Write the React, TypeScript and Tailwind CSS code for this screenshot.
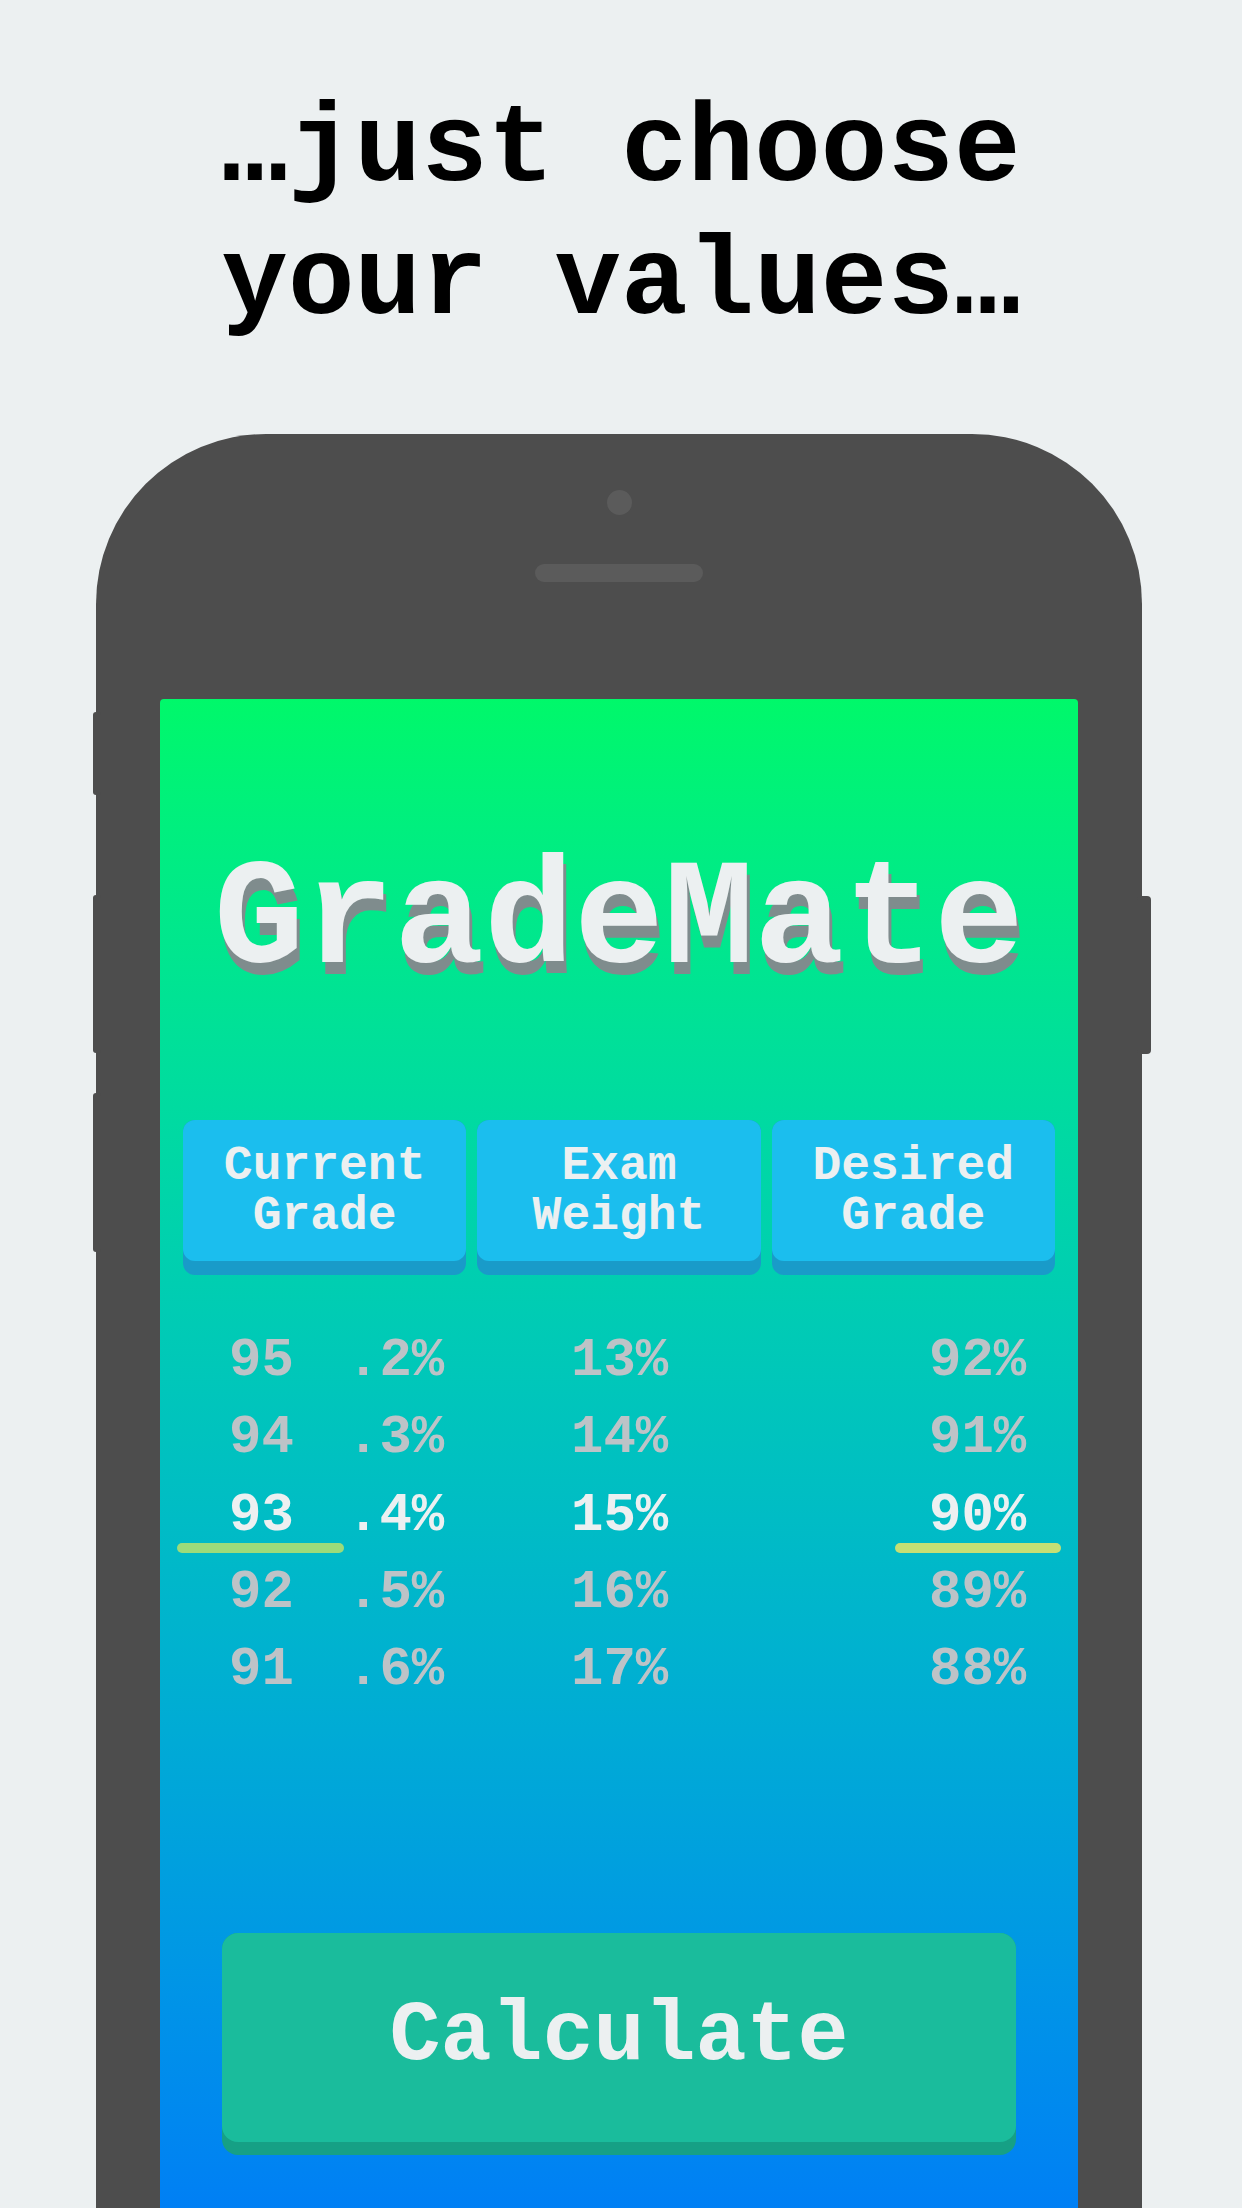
const MONO = "font-['Courier_New','Nimbus_Mono_PS','FreeMono','Liberation_Mono',monospace]"

const ROWS = [
  { whole: '95', frac: '.2%', weight: '13%', desired: '92%' },
  { whole: '94', frac: '.3%', weight: '14%', desired: '91%' },
  { whole: '93', frac: '.4%', weight: '15%', desired: '90%' },
  { whole: '92', frac: '.5%', weight: '16%', desired: '89%' },
  { whole: '91', frac: '.6%', weight: '17%', desired: '88%' },
]

const SELECTED = 2

function HeaderBox({ top, bottom }: { top: string; bottom: string }) {
  return (
    <div className="rounded-[12px] bg-[#199BC9] pb-[14px]">
      <div className="flex h-[141px] flex-col items-center justify-center rounded-[12px] bg-[#1BBEEE] text-center text-[48px] leading-[50px] font-bold text-[#ECF0F1]">
        <span>{top}</span>
        <span>{bottom}</span>
      </div>
    </div>
  )
}

function PickerRows() {
  return (
    <div className="mt-[47px] flex flex-col">
      {ROWS.map((r, i) => {
        const on = i === SELECTED
        const color = on ? 'text-[#ECF0F1]' : 'text-[#BDC3C7]'
        return (
          <div
            key={r.whole}
            className={`grid h-[77.33px] grid-cols-[118px_224px_358px_1fr] pl-[69px] text-[54px] leading-[77.33px] font-bold ${color}`}
          >
            <div className="relative">
              {r.whole}
              {on && (
                <div className="absolute left-[-52px] top-[66px] h-[10px] w-[167px] rounded-full bg-[#9CDB7A]" />
              )}
            </div>
            <div>{r.frac}</div>
            <div>{r.weight}</div>
            <div className="relative">
              {r.desired}
              {on && (
                <div className="absolute left-[-34px] top-[66px] h-[10px] w-[166px] rounded-full bg-[#C5DF74]" />
              )}
            </div>
          </div>
        )
      })}
    </div>
  )
}

export default function App() {
  return (
    <div className={`h-[2208px] w-[1242px] overflow-hidden bg-[#ECF0F1] ${MONO}`}>
      <h1 className="pt-[84px] text-center text-[111px] leading-[133px] font-bold text-black">
        …just choose
        <br />
        your values…
      </h1>

      <div className="relative mt-[84px] ml-[96px] h-[1800px] w-[1046px] rounded-t-[170px] bg-[#4D4D4D]">
        {/* hardware buttons */}
        <div className="absolute left-[-3px] top-[278px] h-[83px] w-[8px] rounded-[3px] bg-[#4D4D4D]" />
        <div className="absolute left-[-3px] top-[461px] h-[158px] w-[8px] rounded-[3px] bg-[#4D4D4D]" />
        <div className="absolute left-[-3px] top-[659px] h-[159px] w-[8px] rounded-[3px] bg-[#4D4D4D]" />
        <div className="absolute right-[-9px] top-[462px] h-[158px] w-[14px] rounded-[4px] bg-[#4D4D4D]" />

        <div className="flex flex-col items-center pt-[56px]">
          <div className="h-[25px] w-[25px] rounded-full bg-[#5B5B5B]" />
          <div className="mt-[49px] h-[18px] w-[168px] rounded-full bg-[#5B5B5B]" />
        </div>

        <div className="mx-[64px] mt-[117px] h-[1520px] rounded-t-[4px] bg-gradient-to-b from-[#00F86A] to-[#007EF5] pt-[148px]">
          <div className="text-center text-[150px] leading-[150px] font-bold text-[#ECF0F1] [text-shadow:3px_12px_0_#7F8C8D]">
            GradeMate
          </div>

          <div className="mt-[123px] grid grid-cols-3 gap-[11px] px-[23px]">
            <HeaderBox top="Current" bottom="Grade" />
            <HeaderBox top="Exam" bottom="Weight" />
            <HeaderBox top="Desired" bottom="Grade" />
          </div>

          <PickerRows />

          <div className="mx-[62px] mt-[224px] rounded-[16px] bg-[#16A085] pb-[13px]">
            <div className="flex h-[209px] items-center justify-center rounded-[16px] bg-[#1ABC9C] text-[85px] font-bold text-[#ECF0F1]">
              Calculate
            </div>
          </div>
        </div>
      </div>
    </div>
  )
}
